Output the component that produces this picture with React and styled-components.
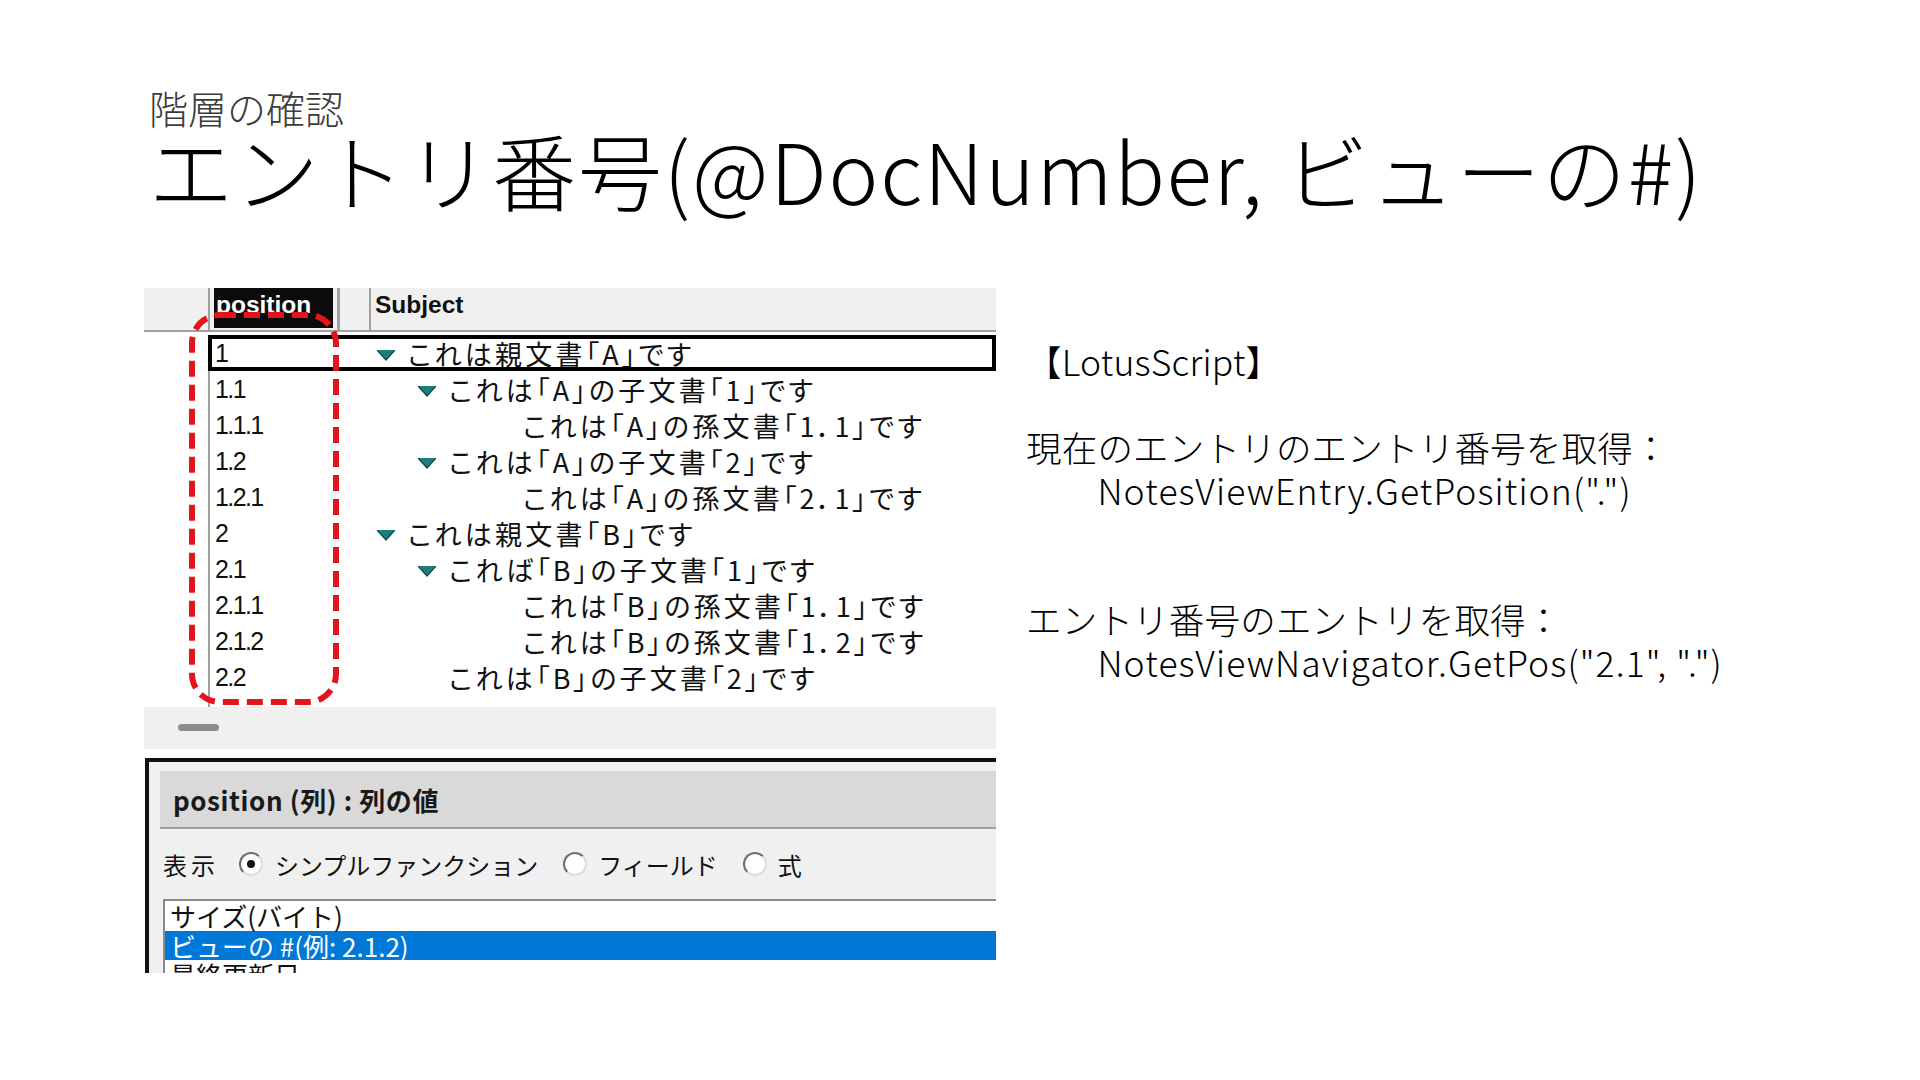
import React from 'react';
import styled, { createGlobalStyle } from 'styled-components';

const GlobalStyle = createGlobalStyle`
    html, body {
        margin: 0;
        padding: 0;
        background: #fff;
    }
    body {
        font-family: "Noto Sans CJK JP", sans-serif;
        color: #000;
    }
`

const rows = [
    { pos: '1', pad: 39, twistie: true, text: 'これは親文書「A」です', selected: true },
    { pos: '1.1', pad: 80, twistie: true, text: 'これは「A」の子文書「1」です' },
    { pos: '1.1.1', pad: 185, text: 'これは「A」の孫文書「1．1」です' },
    { pos: '1.2', pad: 80, twistie: true, text: 'これは「A」の子文書「2」です' },
    { pos: '1.2.1', pad: 185, text: 'これは「A」の孫文書「2．1」です' },
    { pos: '2', pad: 39, twistie: true, text: 'これは親文書「B」です' },
    { pos: '2.1', pad: 80, twistie: true, text: 'これば「B」の子文書「1」です' },
    { pos: '2.1.1', pad: 185, text: 'これは「B」の孫文書「1．1」です' },
    { pos: '2.1.2', pad: 185, text: 'これは「B」の孫文書「1．2」です' },
    { pos: '2.2', pad: 111, text: 'これは「B」の子文書「2」です' },
]

const notes = [
    { text: '【LotusScript】' },
    { text: '' },
    { text: '現在のエントリのエントリ番号を取得：' },
    { text: 'NotesViewEntry.GetPosition(".")', code: true },
    { text: '' },
    { text: '' },
    { text: 'エントリ番号のエントリを取得：' },
    { text: 'NotesViewNavigator.GetPos("2.1", ".")', code: true },
]

const Twistie = () => (
    <TwistieIcon width="18" height="11" viewBox="0 0 18 11">
        <polygon points="0,0 18,0 9,10" fill="#1e7c7b" />
        <polyline points="0,0 9,10 18,0" fill="none" stroke="#0e4a4a" strokeWidth="1.2" />
    </TwistieIcon>
)

const App = () => {
    return (
        <Page>
            <GlobalStyle />
            <Subtitle>階層の確認</Subtitle>
            <Title>エントリ番号(@DocNumber, ビューの#)</Title>

            <Body>
                <Shot>
                    <ViewPane>
                        <Header>
                            <Gutter />
                            <HeadSep />
                            <PosHead>position</PosHead>
                            <HeadSep $w={3} $ml={4} />
                            <HeadBlank />
                            <HeadSep />
                            <SubjectHead>Subject</SubjectHead>
                        </Header>

                        <RowsArea>
                            {rows.map((r) => (
                                <Row key={r.pos}>
                                    <Gutter />
                                    <Cells $selected={r.selected}>
                                        <PosCell>{r.pos}</PosCell>
                                        <SubjectCell $pad={r.pad}>
                                            {r.twistie && <Twistie />}
                                            <span>{r.text}</span>
                                        </SubjectCell>
                                    </Cells>
                                </Row>
                            ))}
                            <FillerRow>
                                <Gutter />
                                <Cells />
                            </FillerRow>
                        </RowsArea>

                        <Footer>
                            <Handle />
                        </Footer>
                    </ViewPane>

                    <PaneGap />

                    <PropPane>
                        <LabelBar>position (列) : 列の値</LabelBar>
                        <RadioRow>
                            <RadioText $ls={4}>表示</RadioText>
                            <Radio $checked $ml={20} />
                            <RadioText $ml={12}>シンプルファンクション</RadioText>
                            <Radio $ml={25} />
                            <RadioText $ml={11}>フィールド</RadioText>
                            <Radio $ml={25} />
                            <RadioText $ml={11}>式</RadioText>
                        </RadioRow>
                        <ListBox>
                            <ListItem>サイズ(バイト)</ListItem>
                            <ListItem $selected>ビューの #(例: 2.1.2)</ListItem>
                            <ListItem>最終更新日</ListItem>
                        </ListBox>
                    </PropPane>

                    <Marker width="150" height="393" viewBox="0 0 150 393">
                        <rect
                            x="3" y="3" width="144" height="387" rx="28"
                            fill="none" stroke="#e3141b" strokeWidth="6"
                            strokeDasharray="16 8"
                        />
                    </Marker>
                </Shot>

                <Notes>
                    {notes.map((line, i) => (
                        <NoteLine key={i}>
                            {line.code ? '　　' : ''}
                            {line.code ? <Code>{line.text}</Code> : line.text || '\u00a0'}
                        </NoteLine>
                    ))}
                </Notes>
            </Body>
        </Page>
    )
}

export default App;

const Page = styled.div`
    width: 1920px;
    height: 1080px;
    box-sizing: border-box;
    padding: 84px 0 0 149px;
    overflow: hidden;
`

const Subtitle = styled.div`
    font-size: 39px;
    font-weight: 300;
    line-height: 46px;
    color: #3c3c3c;
`

const Title = styled.h1`
    margin: 0;
    font-size: 84px;
    font-weight: 300;
    line-height: 78px;
    letter-spacing: 1.8px;
    white-space: nowrap;
`

const Body = styled.div`
    display: flex;
    align-items: flex-start;
    margin-top: 80px;
    margin-left: -5px;
`

const Shot = styled.div`
    position: relative;
    flex: none;
    width: 852px;
    height: 685px;
    overflow: hidden;
    display: flex;
    flex-direction: column;
`

const ViewPane = styled.div`
    display: flex;
    flex-direction: column;
    background: #fff;
`

const Header = styled.div`
    display: flex;
    align-items: flex-start;
    height: 42px;
    background: #f0f0f0;
    border-bottom: 2px solid #a0a0a0;
`

const Gutter = styled.div`
    flex: none;
    width: 64px;
`

const HeadSep = styled.div`
    flex: none;
    align-self: stretch;
    width: ${(p) => p.$w || 2}px;
    margin-left: ${(p) => p.$ml || 0}px;
    background: #a0a0a0;
`

const PosHead = styled.div`
    flex: none;
    width: 117px;
    height: 40px;
    margin-left: 4px;
    padding-left: 2px;
    background: #0b0b0b;
    color: #fff;
    font-family: "Liberation Sans", Arial, sans-serif;
    font-weight: 700;
    font-size: 24.5px;
    line-height: 34px;
    overflow: hidden;
`

const HeadBlank = styled.div`
    flex: none;
    width: 29px;
`

const SubjectHead = styled.div`
    padding-left: 4px;
    font-family: "Liberation Sans", Arial, sans-serif;
    font-weight: 700;
    font-size: 24.5px;
    line-height: 34px;
    color: #111;
`

const RowsArea = styled.div`
    display: flex;
    flex-direction: column;
    height: 375px;
    padding-top: 3px;
    box-sizing: border-box;
`

const Row = styled.div`
    display: flex;
    height: 36px;
    flex: none;
`

const FillerRow = styled.div`
    display: flex;
    flex: 1;
`

const Cells = styled.div`
    flex: 1;
    display: flex;
    align-items: center;
    border-left: 2px solid #a0a0a0;
    outline: ${(p) => (p.$selected ? '4px solid #000' : 'none')};
    outline-offset: -4px;
`

const PosCell = styled.div`
    flex: none;
    width: 123px;
    padding-left: 5px;
    font-family: "Liberation Sans", Arial, sans-serif;
    font-size: 25px;
    letter-spacing: -1.6px;
    color: #111;
`

const SubjectCell = styled.div`
    display: flex;
    align-items: center;
    padding-left: ${(p) => p.$pad}px;
    font-size: 27px;
    font-feature-settings: "palt";
    letter-spacing: 3.2px;
    white-space: nowrap;
    color: #111;
`

const TwistieIcon = styled.svg`
    flex: none;
    margin-right: 13px;
    margin-top: 4px;
`

const Footer = styled.div`
    height: 42px;
    padding: 17px 0 0 34px;
    box-sizing: border-box;
    background: #f0f0f0;
`

const Handle = styled.div`
    width: 41px;
    height: 7px;
    border-radius: 4px;
    background: #8c8c8c;
`

const PaneGap = styled.div`
    height: 9px;
    flex: none;
`

const PropPane = styled.div`
    flex: 1;
    margin-left: 1px;
    padding: 9px 0 0 11px;
    background: #f0f0f0;
    border-top: 4px solid #111;
    border-left: 4px solid #111;
`

const LabelBar = styled.div`
    display: flex;
    align-items: center;
    height: 56px;
    padding-left: 13px;
    background: #d9d9d9;
    border-bottom: 2px solid #a0a0a0;
    font-size: 26px;
    font-weight: 700;
    letter-spacing: 0.6px;
    color: #1a1a1a;
    white-space: nowrap;
`

const RadioRow = styled.div`
    display: flex;
    align-items: center;
    height: 70px;
    padding-left: 3px;
    font-size: 24px;
    color: #111;
`

const RadioText = styled.span`
    margin-left: ${(p) => p.$ml || 0}px;
    letter-spacing: ${(p) => p.$ls || 0}px;
    white-space: nowrap;
`

const Radio = styled.span`
    position: relative;
    flex: none;
    box-sizing: border-box;
    width: 24px;
    height: 24px;
    margin-left: ${(p) => p.$ml || 0}px;
    border-radius: 50%;
    background: #fff;
    border: 2px solid;
    border-color: #6f6f6f #dcdcdc #dcdcdc #6f6f6f;
    &::after {
        content: '';
        display: ${(p) => (p.$checked ? 'block' : 'none')};
        position: absolute;
        left: 6px;
        top: 6px;
        width: 8px;
        height: 8px;
        border-radius: 50%;
        background: #111;
    }
`

const ListBox = styled.div`
    margin-left: 3px;
    background: #fff;
    border-top: 2px solid #8a8a8a;
    border-left: 2px solid #8a8a8a;
`

const ListItem = styled.div`
    height: ${(p) => (p.$selected ? 29 : 30)}px;
    line-height: ${(p) => (p.$selected ? 29 : 30)}px;
    padding-left: 5px;
    font-size: 26px;
    white-space: nowrap;
    background: ${(p) => (p.$selected ? '#0078d7' : '#fff')};
    color: ${(p) => (p.$selected ? '#fff' : '#111')};
`

const Marker = styled.svg`
    position: absolute;
    left: 45px;
    top: 24px;
`

const Notes = styled.div`
    margin-left: 30px;
    padding-top: 51px;
    font-size: 35.5px;
    font-weight: 300;
    line-height: 43px;
    letter-spacing: 0.2px;
`

const NoteLine = styled.div`
    white-space: pre;
`

const Code = styled.span`
    letter-spacing: 1.1px;
`
